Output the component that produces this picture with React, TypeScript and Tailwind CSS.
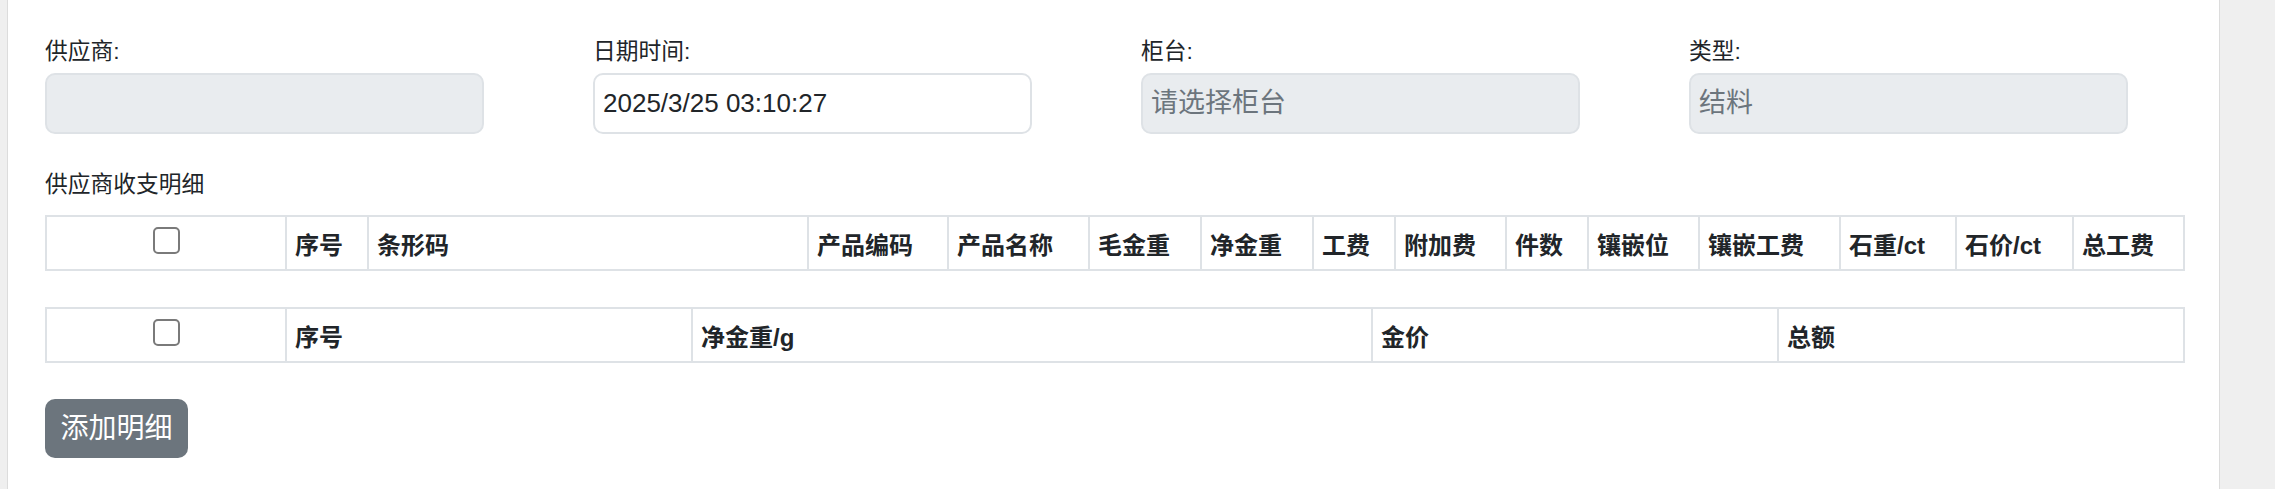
const detailCols = [
  { label: "序号", w: "w-[82px]" },
  { label: "条形码", w: "w-[440px]" },
  { label: "产品编码", w: "w-[140px]" },
  { label: "产品名称", w: "w-[141px]" },
  { label: "毛金重", w: "w-[112px]" },
  { label: "净金重", w: "w-[112px]" },
  { label: "工费", w: "w-[82px]" },
  { label: "附加费", w: "w-[111px]" },
  { label: "件数", w: "w-[82px]" },
  { label: "镶嵌位", w: "w-[111px]" },
  { label: "镶嵌工费", w: "w-[141px]" },
  { label: "石重/ct", w: "w-[116px]" },
  { label: "石价/ct", w: "w-[117px]" },
  { label: "总工费", w: "w-[111px]" },
];

const goldCols = [
  { label: "序号", w: "w-[406px]" },
  { label: "净金重/g", w: "w-[680px]" },
  { label: "金价", w: "w-[406px]" },
  { label: "总额", w: "w-[406px]" },
];

const Checkbox = () => (
  <div className="mx-auto mt-[10px] w-[27px] h-[27px] border-2 border-[#7a7a7a] rounded-[5px] bg-white" />
);

const HeaderTable = ({ cols }: { cols: { label: string; w: string }[] }) => (
  <div className="flex border-l-2 border-t-2 border-[#dee2e6] w-max">
    <div className="w-[240px] h-[54px] border-r-2 border-b-2 border-[#dee2e6]">
      <Checkbox />
    </div>
    {cols.map((c) => (
      <div
        key={c.label}
        className={`${c.w} h-[54px] border-r-2 border-b-2 border-[#dee2e6] pl-[8px] pt-[12px] text-[24px] leading-[33px] font-bold text-[#212529] whitespace-nowrap`}
      >
        {c.label}
      </div>
    ))}
  </div>
);

const Field = ({
  label,
  value,
  placeholder,
  disabled,
}: {
  label: string;
  value?: string;
  placeholder?: string;
  disabled?: boolean;
}) => (
  <div className="w-[439px]">
    <div className="h-[33px] leading-[33px] text-[22.75px] text-[#212529]">{label}</div>
    <div
      className={`mt-[5px] h-[61px] border-2 border-[#dee2e6] rounded-[10px] pl-[8px] flex items-center ${
        disabled ? "bg-[#e9ecef]" : "bg-white"
      }`}
    >
      {value ? (
        <span className="text-[26px] text-[#212529]">{value}</span>
      ) : (
        <span className="text-[27px] text-[#6c757d]">{placeholder}</span>
      )}
    </div>
  </div>
);

const App = () => {
  return (
    <div className="flex h-[489px] w-[2275px] bg-[#efefef] font-['Liberation_Sans','Noto_Sans_CJK_SC',sans-serif] overflow-hidden">
      <div className="ml-[7px] w-[2213px] h-full bg-white border-l border-r border-[#dcdcdc] pl-[37px] pt-[35px]">
        <div className="flex gap-[109px]">
          <Field label="供应商:" placeholder="" disabled />
          <Field label="日期时间:" value="2025/3/25 03:10:27" />
          <Field label="柜台:" placeholder="请选择柜台" disabled />
          <Field label="类型:" placeholder="结料" disabled />
        </div>

        <div className="mt-[34px] h-[33px] leading-[33px] text-[22.75px] text-[#212529]">
          供应商收支明细
        </div>

        <div className="mt-[14px]">
          <HeaderTable cols={detailCols} />
        </div>

        <div className="mt-[36px]">
          <HeaderTable cols={goldCols} />
        </div>

        <button
          type="button"
          className="mt-[36px] w-[143px] h-[59px] rounded-[10px] bg-[#6c757d] text-white text-[28px] flex items-center justify-center"
        >
          添加明细
        </button>
      </div>
    </div>
  );
};

export default App;
